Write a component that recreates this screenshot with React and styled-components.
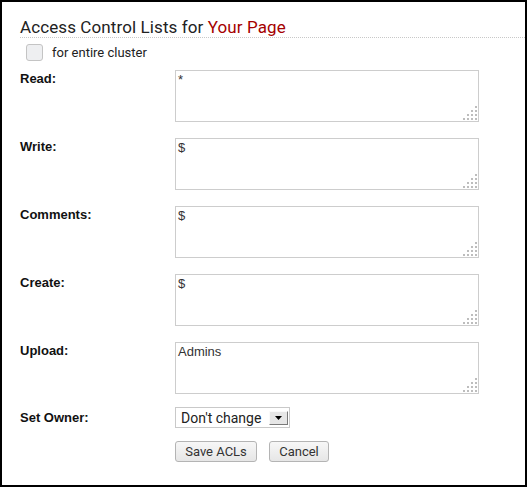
import React from 'react';
import styled, { createGlobalStyle } from 'styled-components';

const GlobalStyle = createGlobalStyle`
  body {
    margin: 0;
    background: #fff;
    font-family: Roboto, "Liberation Sans", sans-serif;
  }
`;

const Frame = styled.div`
  width: 527px;
  height: 487px;
  box-sizing: border-box;
  border: 2px solid #000;
  padding: 15px 0 0 18px;
`;

const Title = styled.h2`
  margin: 0;
  font-family: Roboto, sans-serif;
  font-weight: 400;
  font-size: 17px;
  letter-spacing: 0.1px;
  line-height: 20px;
  color: #222;
  border-bottom: 1px dotted #c8c8c8;
`;

const PageName = styled.span`
  color: #a50000;
`;

const ClusterRow = styled.label`
  display: flex;
  align-items: center;
  gap: 9px;
  margin: 6px 0 0 6px;
  height: 17px;
  font-family: Roboto, sans-serif;
  font-size: 13px;
  color: #222;
`;

const Check = styled.span`
  width: 15px;
  height: 15px;
  border: 1px solid #c4c4c4;
  border-radius: 3px;
  background: #eeeff1;
`;

const Form = styled.div`
  display: grid;
  grid-template-columns: 155px 304px;
  row-gap: 16px;
  margin-top: 9px;
`;

const Label = styled.div`
  font-family: "Liberation Sans", Arial, sans-serif;
  font-weight: 700;
  font-size: 13px;
  line-height: 15px;
  padding-top: 1px;
  color: #111;
  margin-top: ${p => p.$shift || 0}px;
`;

const AreaWrap = styled.div`
  position: relative;
  width: 304px;
  height: 52px;
`;

const Area = styled.textarea`
  width: 100%;
  height: 100%;
  box-sizing: border-box;
  border: 1px solid #cdcdcd;
  padding: 1px 2px;
  margin: 0;
  resize: none;
  outline: none;
  font-family: "Liberation Sans", Arial, sans-serif;
  font-size: 13px;
  line-height: 16px;
  color: #333;
  display: block;
`;

const Grip = styled.svg`
  position: absolute;
  right: 2px;
  bottom: 2px;
  pointer-events: none;
`;

const Controls = styled.div`
  display: flex;
  flex-direction: column;
  align-items: flex-start;
  gap: 13px;
  margin-top: -3px;
`;

const SelectBox = styled.div`
  display: inline-flex;
  align-items: center;
  justify-content: space-between;
  width: 115px;
  height: 21px;
  box-sizing: border-box;
  border: 1px solid #c9c9c9;
  background: #fff;
  padding: 0 1px 0 5px;
`;

const SelectText = styled.span`
  font-family: Roboto, sans-serif;
  font-size: 14px;
  color: #222;
  white-space: nowrap;
`;

const Arrow = styled.span`
  width: 19px;
  height: 14px;
  box-sizing: border-box;
  background: #e6e6e6;
  border: 1px solid;
  border-color: #fafafa #7a7a7a #7a7a7a #fafafa;
  display: flex;
  align-items: center;
  justify-content: center;
`;

const Buttons = styled.div`
  display: flex;
  gap: 12px;
`;

const Button = styled.button`
  height: 21px;
  padding: 0;
  white-space: nowrap;
  border: 1px solid #b4b4b4;
  border-radius: 3px;
  background: linear-gradient(#f7f7f7, #e6e6e6);
  font-family: Roboto, sans-serif;
  font-size: 13px;
  color: #333;
  width: ${p => p.$w}px;
`;

const fields = [
  ['Read:', '*'],
  ['Write:', '$'],
  ['Comments:', '$'],
  ['Create:', '$'],
  ['Upload:', 'Admins'],
];

const dots = [];
for (let r = 0; r < 4; r++) {
  for (let c = 0; c < 4; c++) {
    if (c >= 3 - r) dots.push([c * 4, r * 4]);
  }
}

const ResizeGrip = () => (
  <Grip width="14" height="14" viewBox="0 0 14 14">
    {dots.map(([x, y]) => (
      <rect key={`${x}-${y}`} x={x} y={y} width="2" height="2" fill="#bdbdbd" />
    ))}
  </Grip>
);

export default function App() {
  return (
    <>
      <GlobalStyle />
      <Frame>
        <Title>
          Access Control Lists for <PageName>Your Page</PageName>
        </Title>
        <ClusterRow>
          <Check />
          for entire cluster
        </ClusterRow>
        <Form>
          {fields.map(([label, value]) => (
            <React.Fragment key={label}>
              <Label>{label}</Label>
              <AreaWrap>
                <Area defaultValue={value} />
                <ResizeGrip />
              </AreaWrap>
            </React.Fragment>
          ))}
          <Label $shift={-1}>Set Owner:</Label>
          <Controls>
            <SelectBox>
              <SelectText>Don't change</SelectText>
              <Arrow>
                <svg width="7" height="4" viewBox="0 0 7 4">
                  <path d="M0 0h7L3.5 4z" fill="#000" />
                </svg>
              </Arrow>
            </SelectBox>
            <Buttons>
              <Button $w={82}>Save ACLs</Button>
              <Button $w={60}>Cancel</Button>
            </Buttons>
          </Controls>
        </Form>
      </Frame>
    </>
  );
}
